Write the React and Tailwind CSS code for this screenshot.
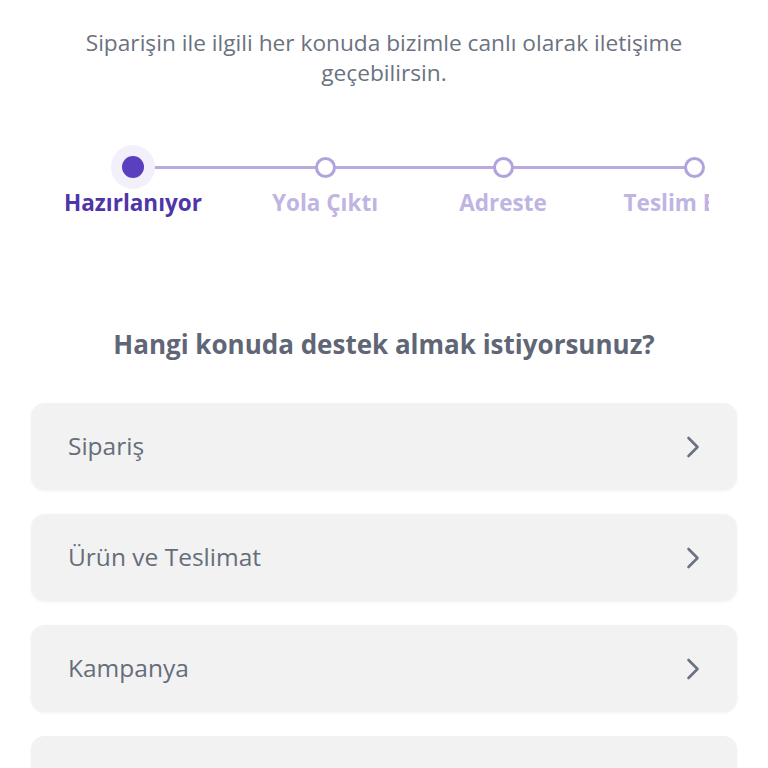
import React from "react";

const steps = [
  { label: "Hazırlanıyor", w: "w-[140px]", ml: "", active: true },
  { label: "Yola Çıktı", w: "w-[104px]", ml: "ml-[70px]" },
  { label: "Adreste", w: "w-[88px]", ml: "ml-[82px]" },
  { label: "Teslim Edildi", w: "w-[138px]", ml: "ml-[78px]" },
];

const topics = ["Sipariş", "Ürün ve Teslimat", "Kampanya", "Diğer"];

function Chevron() {
  return (
    <svg width="16" height="24" viewBox="0 0 16 24" fill="none">
      <path
        d="M3.5 3 L12.5 12 L3.5 21"
        stroke="#6b7280"
        strokeWidth="2.6"
        strokeLinecap="round"
        strokeLinejoin="round"
      />
    </svg>
  );
}

export default function App() {
  return (
    <div
      className="w-[768px] h-[768px] overflow-hidden bg-white"
      style={{ fontFamily: '"Open Sans", "Liberation Sans", sans-serif' }}
    >
      <p className="pt-[28px] px-[70px] text-center text-[22.7px] leading-[30px] text-[#6b7280]">
        Siparişin ile ilgili her konuda bizimle canlı olarak iletişime geçebilirsin.
      </p>

      {/* stepper */}
      <div className="mt-[57px] ml-[63px] w-[646px] overflow-hidden">
        <div className="relative flex w-max">
          <div className="absolute left-[70px] top-[21px] h-[3px] w-[561px] bg-[#b9aae0]" />
          {steps.map((s) => (
            <div key={s.label} className={`relative flex flex-col items-center shrink-0 ${s.w} ${s.ml}`}>
              <div className="flex h-[44px] w-[44px] items-center justify-center">
                {s.active ? (
                  <div className="flex h-[44px] w-[44px] items-center justify-center rounded-full bg-[#f3f0fb]">
                    <div className="h-[22px] w-[22px] rounded-full bg-[#5a3fbe]" />
                  </div>
                ) : (
                  <div className="h-[21px] w-[21px] rounded-full border-[3px] border-[#b3a3dc] bg-white" />
                )}
              </div>
              <span
                className={`whitespace-nowrap text-[22.5px] leading-[28px] font-bold ${
                  s.active ? "text-[#4f35a8]" : "text-[#c0b4e3]"
                }`}
              >
                {s.label}
              </span>
            </div>
          ))}
        </div>
      </div>

      <h2 className="mt-[111px] text-center text-[26px] leading-[32px] font-bold text-[#5f6675]">
        Hangi konuda destek almak istiyorsunuz?
      </h2>

      <div className="mt-[43px] mx-[31px] flex flex-col gap-[24px]">
        {topics.map((t) => (
          <div
            key={t}
            className="flex h-[87px] shrink-0 items-center justify-between rounded-[14px] bg-[#f2f2f3] pl-[37px] pr-[36px] shadow-[0_1px_3px_rgba(0,0,0,0.06)]"
          >
            <span className="text-[24.5px] font-medium text-[#666d7a]">{t}</span>
            <Chevron />
          </div>
        ))}
      </div>
    </div>
  );
}
